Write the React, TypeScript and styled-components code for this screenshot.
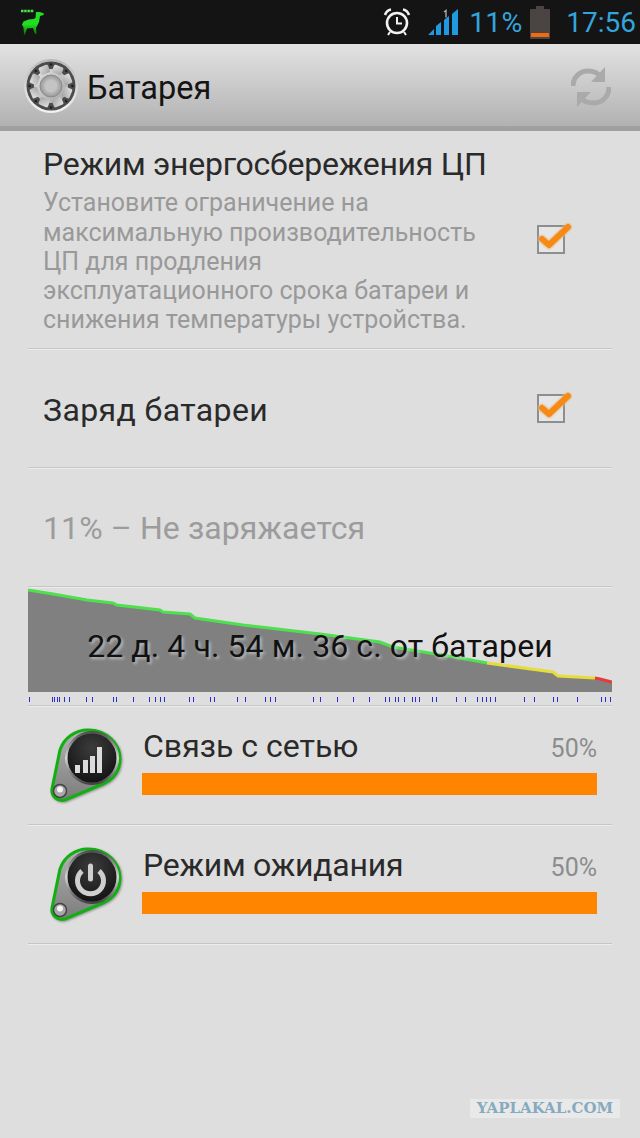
import type { ReactNode } from 'react';
import { createGlobalStyle, styled } from 'styled-components';

const GlobalStyle = createGlobalStyle`
  html, body {
    margin: 0;
    padding: 0;
    background: #dedede;
  }
  * {
    box-sizing: border-box;
  }
`;

const Page = styled.div`
  position: relative;
  width: 640px;
  height: 1138px;
  overflow: hidden;
  background: #dedede;
  font-family: Roboto, 'Noto Sans', sans-serif;
`;

const StatusBar = styled.div`
  display: flex;
  align-items: center;
  height: 44px;
  padding: 0 4px 0 18px;
  background: #141414;
  color: #33a5dc;
`;

const StatusRight = styled.div`
  display: flex;
  align-items: center;
  margin-left: auto;
`;

const Percent = styled.span`
  margin: 1px 8px 0 10px;
  font-size: 28.5px;
`;

const Clock = styled.span`
  margin: 1px 0 0 16px;
  font-size: 28px;
`;

const SignalWrap = styled.div`
  display: flex;
  margin-left: 16px;
`;

const ActionBar = styled.div`
  display: flex;
  align-items: center;
  height: 87px;
  padding: 2px 29px 0 24px;
  background: linear-gradient(#e2e2e2, #b2b2b2);
  border-bottom: 5px solid #a0a0a0;
`;

const ActionTitle = styled.div`
  margin: 4px 0 0 9px;
  font-size: 32.5px;
  color: #141414;
`;

const RefreshWrap = styled.div`
  display: flex;
  margin: 2px 0 0 auto;
`;

const List = styled.div`
  padding: 0 28px;
`;

const Row = styled.div<{ $h: number }>`
  display: flex;
  align-items: center;
  height: ${(p) => p.$h}px;
  padding: 0 47px 0 15px;
  border-bottom: 1px solid #c6c6c6;
  box-shadow: 0 1px 0 #ececec;
`;

const RowText = styled.div<{ $top: number }>`
  flex: 1;
  padding-top: ${(p) => p.$top}px;
`;

const RowTitle = styled.div<{ $muted?: boolean; $spacing?: number }>`
  font-size: 32px;
  line-height: 36px;
  letter-spacing: ${(p) => p.$spacing ?? 0}px;
  color: ${(p) => (p.$muted ? '#9c9c9c' : '#2a2a2a')};
`;

const RowDesc = styled.div`
  margin-top: 6px;
  font-size: 25px;
  line-height: 29.3px;
  color: #999;
`;

const CheckBox = styled.div`
  position: relative;
  width: 28px;
  height: 29px;
  border: 2px solid #8e8e8e;
  background: #e6e6e6;
`;

const CheckMark = styled.svg`
  position: absolute;
  left: -4px;
  top: -9px;
  overflow: visible;
`;

const ChartBox = styled.div`
  position: relative;
  height: 119px;
  border-bottom: 1px solid #c6c6c6;
  box-shadow: 0 1px 0 #ececec;
`;

const ChartSvg = styled.svg`
  display: block;
`;

const ChartLabel = styled.div`
  position: absolute;
  left: 0;
  right: 0;
  top: 41px;
  text-align: center;
  font-size: 32px;
  line-height: 36px;
  letter-spacing: 0.1px;
  color: #111;
  text-shadow: 2px 2px 3px rgba(225, 225, 225, 0.6);
`;

const UsageRow = styled.div`
  display: flex;
  height: 119px;
  padding: 20px 15px 0 19px;
  border-bottom: 1px solid #c6c6c6;
  box-shadow: 0 1px 0 #ececec;
`;

const PinIcon = styled.svg`
  flex: none;
  filter: drop-shadow(1px 1px 1px rgba(0, 0, 0, 0.35));
`;

const UsageBody = styled.div`
  flex: 1;
  margin-left: 19px;
`;

const UsageHead = styled.div`
  display: flex;
  justify-content: space-between;
  height: 47px;
`;

const UsageName = styled.div<{ $spacing?: number }>`
  padding-left: 1px;
  font-size: 32px;
  line-height: 40px;
  letter-spacing: ${(p) => p.$spacing ?? 0}px;
  color: #2a2a2a;
`;

const UsagePercent = styled.div`
  padding-top: 8px;
  font-size: 25px;
  line-height: 30px;
  color: #8c8c8c;
`;

const UsageBar = styled.div`
  height: 22px;
  background: #ff8400;
`;

const Watermark = styled.div`
  position: absolute;
  left: 470px;
  top: 1099px;
  width: 150px;
  height: 19px;
  background: #e9e9e9;
  color: #86aabf;
  font-family: 'DejaVu Serif', serif;
  font-weight: 700;
  font-size: 15px;
  line-height: 19px;
  text-align: center;
  white-space: nowrap;
`;

const points: [number, number][] = [
  [0, 0], [25, 4], [59, 10], [85, 13], [89, 15], [132, 20], [135, 22], [162, 24], [167, 28], [215, 35],
  [292, 44], [352, 52], [365, 57], [432, 68], [459, 73],
];
const yellowPts: [number, number][] = [[459, 73], [525, 82], [530, 86], [567, 88]];
const redPts: [number, number][] = [[567, 88], [572, 89], [584, 92]];

const toLine = (pts: [number, number][]) => pts.map((p) => p.join(',')).join(' ');

const ticks = [
  1, 24, 26, 29, 31, 36, 41, 58, 64, 85, 88, 105, 121, 127, 132, 136, 161, 165, 182, 186, 209, 217, 237, 242, 247,
  285, 292, 309, 325, 341, 357, 361, 367, 370, 376, 384, 387, 391, 404, 408, 428, 437, 449, 454, 458, 462, 467,
  496, 506, 525, 529, 549, 573, 577, 582,
];

function Llama() {
  return (
    <svg width="30" height="28" viewBox="0 0 30 28">
      <defs>
        <linearGradient id="llama" x1="0" y1="0" x2="0" y2="1">
          <stop offset="0.55" stopColor="#22dd22" />
          <stop offset="1" stopColor="#0c6a0c" />
        </linearGradient>
      </defs>
      <path d="M3 3h13" stroke="#44e844" strokeWidth="2.500" strokeDasharray="2.500 .7" />
      <path
        d="M18 4h4l4 1.500-.500 1.500-3.500 1-1 6-3 6 .500 6h-1.500l-2-6-6 .500-2 6h-1l-.500-7-1.500-3 1.500-3 5-2 5-.500 2-1z"
        fill="url(#llama)"
      />
    </svg>
  );
}

function AlarmClock() {
  return (
    <svg width="28" height="30" viewBox="0 0 28 30" fill="none" stroke="#f2f2f2">
      <circle cx="14" cy="16" r="10" strokeWidth="2.600" />
      <path d="M14 10v6.500h5" strokeWidth="2" />
      <path d="M2 8c1-3 3-5 6-5.500M26 8c-1-3-3-5-6-5.500" strokeWidth="2.600" />
      <path d="M7 25l-2 3M21 25l2 3" strokeWidth="2" />
    </svg>
  );
}

function Signal() {
  return (
    <svg width="32" height="30" viewBox="0 0 32 30">
      <path d="M1 28l6-6v6zM9 28v-9l5-4v13zM17 28v-15l5-4v19zM25 28v-21l6-5v26z" fill="#1f9ae0" />
      <path d="M17 5l2-1.500v7" stroke="#aaa" strokeWidth="1.400" fill="none" />
    </svg>
  );
}

function Battery() {
  return (
    <svg width="20" height="33" viewBox="0 0 20 33">
      <path d="M6 0h8v3h5a1 1 0 0 1 1 1v28a1 1 0 0 1-1 1h-18a1 1 0 0 1-1-1v-28a1 1 0 0 1 1-1h5z" fill="#4a4542" />
      <rect x="1" y="27" width="18" height="4" fill="#f06a10" />
    </svg>
  );
}

function GearLogo() {
  const teeth = [0, 45, 90, 135, 180, 225, 270, 315];
  return (
    <svg width="54" height="54" viewBox="0 0 54 54">
      <defs>
        <linearGradient id="rim" x1="0" y1="0" x2="0" y2="1">
          <stop offset="0" stopColor="#b8b8b8" />
          <stop offset="1" stopColor="#f4f4f4" />
        </linearGradient>
        <radialGradient id="hub" cx="0.5" cy="0.5" r="0.55">
          <stop offset="0" stopColor="#eeeeee" />
          <stop offset="1" stopColor="#8e8e8e" />
        </radialGradient>
        <linearGradient id="gear" x1="0" y1="0" x2="1" y2="1">
          <stop offset="0" stopColor="#e4e4e4" />
          <stop offset="1" stopColor="#a2a2a2" />
        </linearGradient>
      </defs>
      <circle cx="27" cy="27" r="27" fill="url(#rim)" />
      <circle cx="27" cy="27" r="24.500" fill="#4c4c4c" />
      {teeth.map((a) => (
        <circle key={a} cx="27" cy="5.500" r="1.300" fill="#1e1e1e" transform={`rotate(${a} 27 27)`} />
      ))}
      <circle cx="27" cy="27" r="17" fill="url(#gear)" />
      {teeth.map((a) => (
        <rect key={a} x="22" y="5.500" width="10" height="8" rx="1.500" fill="url(#gear)" transform={`rotate(${a + 22.500} 27 27)`} />
      ))}
      <circle cx="27" cy="27" r="11" fill="url(#hub)" stroke="#8c8c8c" />
      <circle cx="27" cy="27" r="6" fill="#c4c4c4" />
    </svg>
  );
}

function Refresh() {
  return (
    <svg width="40" height="42" viewBox="0 0 40 42" fill="none">
      <path d="M2 20c0-9 7-15 15-15 6 0 10 2 13 6" stroke="#aaa" strokeWidth="5" />
      <path d="M34 1v15h-14z" fill="#aaa" />
      <path d="M38 21c0 10-7 16-16 16-6 0-10-2-13-6" stroke="#aaa" strokeWidth="5" />
      <path d="M6 41v-15h14z" fill="#aaa" />
    </svg>
  );
}

function Check() {
  return (
    <CheckMark width="36" height="32" viewBox="0 0 36 32">
      <path d="M7 21l7 6L33 9" fill="none" stroke="#e8b988" strokeWidth="9" strokeLinecap="round" strokeLinejoin="round" opacity="0.5" />
      <path d="M7 21l7 6L33 9" fill="none" stroke="#f78a14" strokeWidth="6" strokeLinecap="round" strokeLinejoin="round" />
    </CheckMark>
  );
}

function Pin({ id, children }: { id: string; children: ReactNode }) {
  return (
    <PinIcon width="76" height="78" viewBox="0 0 76 78">
      <defs>
        <linearGradient id={`ring${id}`} x1="0" y1="0" x2="0" y2="1">
          <stop offset="0" stopColor="#4a4a4a" />
          <stop offset="0.5" stopColor="#d8d8d8" />
          <stop offset="1" stopColor="#3c3c3c" />
        </linearGradient>
        <radialGradient id={`face${id}`} cx="0.5" cy="0.3" r="0.7">
          <stop offset="0" stopColor="#3c3c3c" />
          <stop offset="1" stopColor="#141414" />
        </radialGradient>
        <linearGradient id={`body${id}`} x1="0" y1="0" x2="0" y2="1">
          <stop offset="0" stopColor="#b4b4b4" />
          <stop offset="1" stopColor="#7c7c7c" />
        </linearGradient>
      </defs>
      <path
        d="M41 4C60 4 73 18 73 33C73 45 66 54 56 58L18 74C10 76 4 70 5 63L13 24C17 12 28 4 41 4z"
        fill={`url(#body${id})`}
        stroke="#10b010"
        strokeWidth="3"
      />
      <circle cx="45" cy="32" r="27" fill={`url(#ring${id})`} />
      <circle cx="45" cy="32" r="24.500" fill={`url(#face${id})`} />
      <circle cx="13" cy="65" r="6.500" fill="#a8a8a8" stroke="#444" strokeWidth="1.500" />
      <circle cx="13" cy="63.500" r="3" fill="#f4f4f4" />
      {children}
    </PinIcon>
  );
}

export default function App() {
  return (
    <Page>
      <GlobalStyle />
      <StatusBar>
        <Llama />
        <StatusRight>
          <AlarmClock />
          <SignalWrap>
            <Signal />
          </SignalWrap>
          <Percent>11%</Percent>
          <Battery />
          <Clock>17:56</Clock>
        </StatusRight>
      </StatusBar>
      <ActionBar>
        <GearLogo />
        <ActionTitle>Батарея</ActionTitle>
        <RefreshWrap>
          <Refresh />
        </RefreshWrap>
      </ActionBar>
      <List>
        <Row $h={218}>
          <RowText $top={2}>
            <RowTitle $spacing={-0.25}>Режим энергосбережения ЦП</RowTitle>
            <RowDesc>
              Установите ограничение на
              <br />
              максимальную производительность
              <br />
              ЦП для продления
              <br />
              эксплуатационного срока батареи и
              <br />
              снижения температуры устройства.
            </RowDesc>
          </RowText>
          <CheckBox>
            <Check />
          </CheckBox>
        </Row>
        <Row $h={119}>
          <RowText $top={4}>
            <RowTitle $spacing={0.4}>Заряд батареи</RowTitle>
          </RowText>
          <CheckBox>
            <Check />
          </CheckBox>
        </Row>
        <Row $h={119}>
          <RowText $top={2}>
            <RowTitle $muted $spacing={0.1}>11% – Не заряжается</RowTitle>
          </RowText>
        </Row>
        <ChartBox>
          <ChartSvg width="584" height="118" viewBox="0 -3 584 118">
            <polygon points={`0,102 ${toLine(points)} ${toLine(yellowPts)} ${toLine(redPts)} 584,102`} fill="#808080" />
            <polyline points={toLine(points)} fill="none" stroke="#4fe04f" strokeWidth="3" />
            <polyline points={toLine(yellowPts)} fill="none" stroke="#e6dc3c" strokeWidth="3" />
            <polyline points={toLine(redPts)} fill="none" stroke="#e83a3a" strokeWidth="3" />
            {ticks.map((x) => (
              <line key={x} x1={x + 0.5} x2={x + 0.5} y1="107" y2="112" stroke="#2c2cd0" strokeWidth="1" />
            ))}
          </ChartSvg>
          <ChartLabel>22 д. 4 ч. 54 м. 36 с. от батареи</ChartLabel>
        </ChartBox>
        <UsageRow>
          <Pin id="a">
            <path d="M28 47v-8h5v8zM36 47v-13h5v13zM43 47v-17h5v17zM50 47v-26h5v26z" fill="#dcdcdc" />
          </Pin>
          <UsageBody>
            <UsageHead>
              <UsageName>Связь с сетью</UsageName>
              <UsagePercent>50%</UsagePercent>
            </UsageHead>
            <UsageBar />
          </UsageBody>
        </UsageRow>
        <UsageRow>
          <Pin id="b">
            <path d="M35 26a13 13 0 1 0 17 0" fill="none" stroke="#cfcfcf" strokeWidth="5" />
            <path d="M43.500 21v13" stroke="#cfcfcf" strokeWidth="5" strokeLinecap="round" />
          </Pin>
          <UsageBody>
            <UsageHead>
              <UsageName $spacing={-0.25}>Режим ожидания</UsageName>
              <UsagePercent>50%</UsagePercent>
            </UsageHead>
            <UsageBar />
          </UsageBody>
        </UsageRow>
      </List>
      <Watermark>YAPLAKAL.COM</Watermark>
    </Page>
  );
}
